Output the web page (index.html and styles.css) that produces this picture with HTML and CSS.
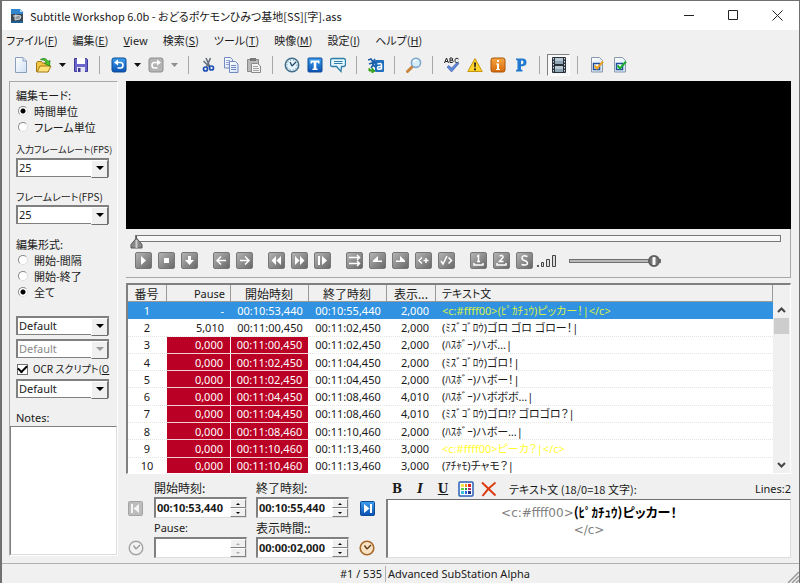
FILE: index.html
```html
<!DOCTYPE html>
<html lang="ja">
<head>
    <meta charset="UTF-8">
    <meta name="viewport" content="width=device-width, initial-scale=1.0">
    <title>Subtitle Workshop 6.0b</title>
    <link rel="stylesheet" href="styles.css">
</head>
<body>
    <svg class="defs" aria-hidden="true">
        <defs>
            <linearGradient id="blue" x1="0" y1="0" x2="0" y2="1"><stop offset="0" stop-color="#3da0ee"/><stop offset="1" stop-color="#0a50b4"/></linearGradient>
            <linearGradient id="orange" x1="0" y1="0" x2="0" y2="1"><stop offset="0" stop-color="#f7a544"/><stop offset="1" stop-color="#d86a08"/></linearGradient>
            <linearGradient id="page" x1="0" y1="0" x2="1" y2="1"><stop offset="0" stop-color="#fff"/><stop offset="1" stop-color="#cfe0f5"/></linearGradient>
        </defs>
    </svg>

    <div class="window">
        <header class="titlebar">
            <svg class="app-icon" width="14" height="16" viewBox="0 0 14 16"><path d="M1 1h9l3 3v11H1z" fill="#3b4650"/><path d="M1 1h9l3 3v2H1z" fill="#2f86cf"/><path d="M10 1v3h3z" fill="#b9dcf5"/><path d="M3 8h4M5 7l6 1-1 3-5 1z" stroke="#cfd6dc" fill="#8d979f"/><path d="M1 13h12v2H1z" fill="#1d5e95"/></svg>
            <span class="title">Subtitle Workshop 6.0b - おどるポケモンひみつ基地[SS][字].ass</span>
            <button class="win-btn" aria-label="Minimize"><svg width="11" height="11"><path d="M0 5.5h10" stroke="#222"/></svg></button>
            <button class="win-btn" aria-label="Maximize"><svg width="11" height="11"><path d="M.5.5h9v9h-9z" fill="none" stroke="#222"/></svg></button>
            <button class="win-btn" aria-label="Close"><svg width="11" height="11"><path d="M.5.5l10 10M10.5.5l-10 10" stroke="#222"/></svg></button>
        </header>

        <nav class="menubar">
            <button>ファイル(<u>F</u>)</button>
            <button>編集(<u>E</u>)</button>
            <button><u>V</u>iew</button>
            <button>検索(<u>S</u>)</button>
            <button>ツール(<u>T</u>)</button>
            <button>映像(<u>M</u>)</button>
            <button>設定(<u>I</u>)</button>
            <button>ヘルプ(<u>H</u>)</button>
        </nav>

        <div class="toolbar">
            <button aria-label="New"><svg width="16" height="16"><path d="M2.500.5h7.500l3.500 3.500v11.500h-11z" fill="url(#page)" stroke="#8ba0bd"/><path d="M10 .5v3.500h3.500" fill="#dce9f8" stroke="#8ba0bd"/></svg></button>
            <button aria-label="Open"><svg width="16" height="16"><path d="M.5 14.500v-9l1-1h4l1 1.500h6v8.500z" fill="#f3c540" stroke="#a07818"/><path d="M1 15l3-6h11l-3 6z" fill="#ffe27a" stroke="#a07818"/><path d="M4.500 2.500q5-3 7.500 2l2-1-.5 5.500-5-2.500 2-1q-1.500-3-6-3z" fill="#4cc82c" stroke="#237d12" stroke-width=".8"/></svg></button>
            <button class="drop" aria-label="Recent files"><svg width="7" height="4"><path d="M0 0h7l-3.500 4z" fill="#111"/></svg></button>
            <button aria-label="Save"><svg width="16" height="16"><path d="M1.500 1.500h12l1 1v12h-13z" fill="#6a66cc" stroke="#3f3b96"/><path d="M4 1h8v6H4z" fill="#fff"/><path d="M4 10h8v5H4z" fill="#e5e5f6"/><path d="M5 11h2.500v4H5z" fill="#3f3b96"/></svg></button>
            <span class="sep"></span>
            <button aria-label="Undo"><svg width="16" height="16"><rect x="1" y="1" width="14" height="14" rx="2" fill="url(#blue)" stroke="#0d4b96"/><path d="M5 5.500h4.500q2.500 0 2.500 2.700t-2.500 2.800h-3" fill="none" stroke="#fff" stroke-width="1.600"/><path d="M7 2.500v6l-4-3z" fill="#fff"/></svg></button>
            <button class="drop" aria-label="Undo list"><svg width="7" height="4"><path d="M0 0h7l-3.500 4z" fill="#111"/></svg></button>
            <button aria-label="Redo" disabled><svg width="16" height="16"><rect x="1" y="1" width="14" height="14" rx="2" fill="#b4b4b4" stroke="#8f8f8f"/><path d="M11 5.500h-4.500q-2.500 0-2.500 2.700t2.500 2.800h3" fill="none" stroke="#fff" stroke-width="1.600"/><path d="M9 2.500v6l4-3z" fill="#fff"/></svg></button>
            <button class="drop" aria-label="Redo list" disabled><svg width="7" height="4"><path d="M0 0h7l-3.500 4z" fill="#8e8e8e"/></svg></button>
            <span class="sep"></span>
            <button aria-label="Cut"><svg width="16" height="16"><path d="M6 1l4 9M10.500 1l-4 9M3.500 4l6 6" stroke="#66727f" stroke-width="1.600"/><circle cx="5.500" cy="12" r="2" fill="none" stroke="#1e4fb4" stroke-width="1.700"/><circle cx="11.500" cy="11" r="2" fill="none" stroke="#1e4fb4" stroke-width="1.700"/></svg></button>
            <button aria-label="Copy"><svg width="16" height="16"><path d="M1.500.5h6l2 2v8.500h-8z" fill="url(#page)" stroke="#7489c0"/><path d="M3 3.500h4M3 5.500h3M3 7.500h3" stroke="#8ea3d4"/><path d="M6.500 4.500h6l2.500 2.500v8.500H6.500z" fill="url(#page)" stroke="#7489c0"/><path d="M8 8.500h5M8 10.500h5M8 12.500h5" stroke="#7489c0"/></svg></button>
            <button aria-label="Paste"><svg width="16" height="16"><path d="M1.500 2.500h11v12h-11z" fill="#b9b9b9" stroke="#8a8a8a"/><path d="M4 1h6v3H4z" fill="#777"/><path d="M5.500 6.500h6l3 2.500v6.500h-9z" fill="#f3f3f3" stroke="#8a8a8a"/><path d="M7 9.500h5M7 11.500h6M7 13.500h6" stroke="#a2a2a2"/></svg></button>
            <span class="sep"></span>
            <button aria-label="Timings"><svg width="16" height="16"><circle cx="8" cy="8" r="6.700" fill="#e6f4fb" stroke="#436d8b" stroke-width="1.500"/><circle cx="8" cy="8" r="5" fill="none" stroke="#5c88a5" stroke-dasharray="1 2"/><path d="M8 9l-2-4M8 9l4-4" stroke="#274b66" stroke-width="1.300"/></svg></button>
            <button aria-label="Texts"><svg width="16" height="16"><rect x="1" y="1" width="14" height="14" rx="1" fill="url(#blue)" stroke="#0d4b96"/><path d="M3.500 3.500h9v3h-1.500v-1h-1.700v6h1.200v1.500h-5V11.500h1.200v-6H5v1H3.500z" fill="#fff"/></svg></button>
            <button aria-label="Subtitles"><svg width="16" height="16"><path d="M2.500 1.500h11q2 0 2 2v4q0 2-2 2h-2l-.5 5-4.500-5h-4q-2 0-2-2v-4q0-2 2-2z" fill="#e6f6fd" stroke="#2c7fa8" stroke-width="1.300"/><path d="M4 4.500h8.500M4 6.500h8.500" stroke="#2c7fa8"/></svg></button>
            <span class="sep"></span>
            <button aria-label="Translation"><svg width="16" height="16"><rect x="7" y="3" width="9" height="12" rx="1" fill="#1f6fbd"/><path d="M9.500 7q4-1.500 4 1v4.500M13.500 9.500q-4-.3-4 1.700t4 .3" fill="none" stroke="#fff" stroke-width="1.500"/><path d="M0 3l3-1 2 3 2-3M1 7l6-2-4 6M4 6l3 4" fill="none" stroke="#1b5fa8" stroke-width="1.600"/><path d="M1 11v3h4M4 11l3 3-3 2z" stroke="#35a01e" fill="#35a01e"/></svg></button>
            <span class="sep"></span>
            <button aria-label="Find"><svg width="16" height="16"><path d="M1.500 14.500l5-5" stroke="#c8843c" stroke-width="3" stroke-linecap="round"/><circle cx="10" cy="5.800" r="4.600" fill="#d5ecfb" stroke="#7aa3c8" stroke-width="1.500"/><path d="M7.500 5q1-2 3-2" fill="none" stroke="#fff" stroke-width="1.400"/></svg></button>
            <span class="sep"></span>
            <button aria-label="Spell check"><svg width="16" height="16"><path d="M.5 6l2-5 2 5M1.300 4.500h2.500M6 1v4.500h2.500q1.500-1.200 0-2.300H6M8.300 3.200q1-1.700-.3-2.200H6M14.500 2q-3.500-2-3.500 1.500t3.500 1.500" fill="none" stroke="#222"/><path d="M3 10l2-1.500 2.500 2.500L13 5.500l2 1L7.500 15z" fill="#5e86d6" stroke="#3b5da8" stroke-width=".6"/></svg></button>
            <button aria-label="Warnings"><svg width="16" height="16"><path d="M8 1.500l7.200 13H.8z" fill="#ffd42a" stroke="#c8960a" stroke-linejoin="round"/><path d="M7 5.500h2l-.4 5H7.400zM7 11.500h2v1.800H7z" fill="#222"/></svg></button>
            <button aria-label="Information"><svg width="16" height="16"><rect x="1" y="1" width="14" height="14" rx="2" fill="url(#orange)" stroke="#a85408"/><path d="M7 3h2v2H7zM6 6.500h3V12h1v1H6v-1h1V7.500H6z" fill="#fff"/></svg></button>
            <button aria-label="Pascal scripts"><svg width="16" height="16"><path d="M3 1.500h6.500q4 0 4 3.800t-4 3.900H8v3.300l1.500.5v1.500H3V13l1.500-.5v-9L3 3zM8 3.500v3.800h1q1.500 0 1.500-2T9 3.500z" fill="#2078d0" fill-rule="evenodd"/></svg></button>
            <span class="sep"></span>
            <button class="pressed" aria-label="Video preview" aria-pressed="true"><svg width="16" height="16"><rect x="1" width="14" height="16" rx="1" fill="#28313a"/><path d="M4 1h8v6H4zM4 9h8v6H4z" fill="#8fa5b5"/><path d="M4 1h8v3H4zM4 9h8v3H4z" fill="#b7c8d3"/><path d="M2.500 1v14M13.500 1v14" stroke="#d9e0e5" stroke-dasharray="1.500 1.500"/></svg></button>
            <span class="sep"></span>
            <button aria-label="Check"><svg width="16" height="16"><path d="M2.500.5h8l3 3v11.500h-11z" fill="url(#page)" stroke="#8b98ab"/><path d="M4.500 6.500h6v6h-6z" fill="#fff" stroke="#214f9e" stroke-width="1.500"/><path d="M5.500 8.500l2.500 3L14 4.500" fill="none" stroke="#eaa020" stroke-width="2"/></svg></button>
            <button aria-label="Check and fix"><svg width="16" height="16"><path d="M2.500.5h8l3 3v11.500h-11z" fill="url(#page)" stroke="#8b98ab"/><path d="M4.500 6.500h6v6h-6z" fill="#fff" stroke="#214f9e" stroke-width="1.500"/><path d="M5.500 8.500l2.500 3L14 4.500" fill="none" stroke="#18b030" stroke-width="2"/></svg></button>
        </div>

        <main class="main">
            <aside class="sidebar">
                <div class="settings">
                    <p>編集モード:</p>
                    <label class="option"><input type="radio" name="mode" checked>時間単位</label>
                    <label class="option"><input type="radio" name="mode">フレーム単位</label>

                    <label class="field fps long" for="inputFps">入力フレームレート(FPS)</label>
                    <div class="combo"><select id="inputFps"><option>25</option></select></div>

                    <label class="field fps" for="fps">フレームレート(FPS)</label>
                    <div class="combo"><select id="fps"><option>25</option></select></div>

                    <p class="field">編集形式:</p>
                    <label class="option"><input type="radio" name="format">開始-間隔</label>
                    <label class="option"><input type="radio" name="format">開始-終了</label>
                    <label class="option"><input type="radio" name="format" checked>全て</label>

                    <div class="combo styles"><select aria-label="Charset"><option>Default</option></select></div>
                    <div class="combo disabled"><select aria-label="Translation charset" disabled><option>Default</option></select></div>
                    <label class="option ocr"><input type="checkbox" checked>OCR スクリプト(<u>O</u></label>
                    <div class="combo"><select aria-label="OCR script"><option>Default</option></select></div>
                    <label class="field" for="notes">Notes:</label>
                </div>
                <textarea class="notes" id="notes"></textarea>
            </aside>

            <div class="work">
                <div class="video"></div>
                <div class="player">
                    <div class="seek"><svg class="seek-thumb" width="13" height="14"><path d="M6.500 1v2M6.500 3L12 9.500V13H1V9.500z" fill="#888" stroke="#555"/><path d="M6.500 5v8" stroke="#ccc" stroke-width="2"/></svg></div>
                    <div class="controls">
                        <div class="group">
                            <button aria-label="Play"><svg viewBox="0 0 17 17"><path d="M6 4l5 4.500L6 13z"/></svg></button>
                            <button aria-label="Stop"><svg viewBox="0 0 17 17"><path d="M6 6h5v5H6z"/></svg></button>
                            <button aria-label="Scroll list"><svg viewBox="0 0 17 17"><path d="M7 4h3v4h3l-4.500 5L4 8h3z"/></svg></button>
                        </div>
                        <div class="group">
                            <button aria-label="Previous subtitle"><svg viewBox="0 0 17 17"><path class="line" d="M13 8.500H4M8 4.500l-4 4 4 4"/></svg></button>
                            <button aria-label="Next subtitle"><svg viewBox="0 0 17 17"><path class="line" d="M4 8.500h9M9 4.500l4 4-4 4"/></svg></button>
                        </div>
                        <div class="group">
                            <button aria-label="Rewind"><svg viewBox="0 0 17 17"><path d="M8 4v9L3.500 8.500zM13 4v9L8.500 8.500z"/></svg></button>
                            <button aria-label="Forward"><svg viewBox="0 0 17 17"><path d="M4 4v9l4.500-4.500zM9 4v9l4.500-4.500z"/></svg></button>
                            <button aria-label="Playback rate"><svg viewBox="0 0 17 17"><path d="M4 4h2v9H4zM8 4v9l5-4.500z"/></svg></button>
                        </div>
                        <div class="group">
                            <button aria-label="Move subtitle"><svg viewBox="0 0 17 17"><path class="line" d="M3 5.500h10M3 11.500h10M11 3l2.500 2.500L11 8M11 9l2.500 2.500L11 14"/></svg></button>
                            <button aria-label="Set start time"><svg viewBox="0 0 17 17"><path d="M9 4v4.500h4V10H4V8.500z"/></svg></button>
                            <button aria-label="Set final time"><svg viewBox="0 0 17 17"><path d="M8 4v4.500H4V10h9V8.500z"/></svg></button>
                            <button aria-label="Start subtitle"><svg viewBox="0 0 17 17"><path class="line" d="M7 5.500L4 8.500l3 3M8.500 8.500h5M11 6v5"/></svg></button>
                            <button aria-label="End subtitle"><svg viewBox="0 0 17 17"><path class="line" d="M3 9l2 3 4-8M10.500 5.500l3 3-3 3"/></svg></button>
                        </div>
                        <div class="group">
                            <button aria-label="First sync point"><svg viewBox="0 0 17 17"><path class="line" d="M7 4.500L8.500 3.500v6M7 9.500h3M4 11v2h9v-2"/></svg></button>
                            <button aria-label="Last sync point"><svg viewBox="0 0 17 17"><path class="line" d="M6.500 4q4-1.500 3.500 1.500L6.500 9.500h4M4 11v2h9v-2"/></svg></button>
                            <button aria-label="Add sync point"><svg viewBox="0 0 17 17"><path class="line" d="M11.500 4.500Q6 2.500 6 6q0 2 2.500 2.500T11.500 11q0 3-6 1.500"/></svg></button>
                        </div>
                        <svg class="volume-icon" width="20" height="14"><path d="M1 11h2v2H1z" fill="#555"/><path d="M5.500 8.500h2v4h-2zM10.500 5.500h3v7h-3zM16.500 1.500h3v11h-3z" fill="#ddd" stroke="#444"/></svg>
                        <input class="volume" type="range" min="0" max="100" value="100" aria-label="Volume">
                    </div>
                </div>

                <div class="list">
                    <div class="list-view">
                        <table>
                            <colgroup><col class="c-num"><col class="c-pause"><col class="c-time"><col class="c-time"><col class="c-dur"><col></colgroup>
                            <thead>
                                <tr><th>番号</th><th>Pause</th><th>開始時刻</th><th>終了時刻</th><th>表示...</th><th>テキスト文</th></tr>
                            </thead>
                            <tbody>
                                <tr class="selected"><td>1</td><td>-</td><td>00:10:53,440</td><td>00:10:55,440</td><td>2,000</td><td class="yellow">&lt;c:#ffff00&gt;(ﾋﾟｶﾁｭｳ)ピッカー！|&lt;/c&gt;</td></tr>
                                <tr><td>2</td><td>5,010</td><td>00:11:00,450</td><td>00:11:02,450</td><td>2,000</td><td>(ﾐｽﾞｺﾞﾛｳ)ゴロ ゴロ ゴロー！|</td></tr>
                                <tr class="bad"><td>3</td><td>0,000</td><td>00:11:00,450</td><td>00:11:02,450</td><td>2,000</td><td>(ﾊｽﾎﾞｰ)ハボ…|</td></tr>
                                <tr class="bad"><td>4</td><td>0,000</td><td>00:11:02,450</td><td>00:11:04,450</td><td>2,000</td><td>(ﾐｽﾞｺﾞﾛｳ)ゴロ！|</td></tr>
                                <tr class="bad"><td>5</td><td>0,000</td><td>00:11:02,450</td><td>00:11:04,450</td><td>2,000</td><td>(ﾊｽﾎﾞｰ)ハボー！|</td></tr>
                                <tr class="bad"><td>6</td><td>0,000</td><td>00:11:04,450</td><td>00:11:08,460</td><td>4,010</td><td>(ﾊｽﾎﾞｰ)ハボボボ…|</td></tr>
                                <tr class="bad"><td>7</td><td>0,000</td><td>00:11:04,450</td><td>00:11:08,460</td><td>4,010</td><td>(ﾐｽﾞｺﾞﾛｳ)ゴロ!? ゴロゴロ？|</td></tr>
                                <tr class="bad"><td>8</td><td>0,000</td><td>00:11:08,460</td><td>00:11:10,460</td><td>2,000</td><td>(ﾊｽﾎﾞｰ)ハボー…|</td></tr>
                                <tr class="bad"><td>9</td><td>0,000</td><td>00:11:10,460</td><td>00:11:13,460</td><td>3,000</td><td class="yellow">&lt;c:#ffff00&gt;ピーカ？|&lt;/c&gt;</td></tr>
                                <tr class="bad"><td>10</td><td>0,000</td><td>00:11:10,460</td><td>00:11:13,460</td><td>3,000</td><td>(ｱﾁｬﾓ)チャモ？|</td></tr>
                            </tbody>
                        </table>
                    </div>
                    <div class="scrollbar">
                        <button aria-label="Scroll up"><svg width="9" height="6"><path d="M1 5l3.500-3.500L8 5" fill="none" stroke="#444" stroke-width="2"/></svg></button>
                        <div class="thumb"></div>
                        <button aria-label="Scroll down"><svg width="9" height="6"><path d="M1 1l3.500 3.500L8 1" fill="none" stroke="#444" stroke-width="2"/></svg></button>
                    </div>
                </div>

                <div class="editor">
                    <div class="times">
                        <button class="icon-btn" aria-label="Previous" disabled><svg width="15" height="15"><rect x=".5" y=".5" width="14" height="14" rx="1" fill="#bcbcbc" stroke="#a2a2a2"/><path d="M3 3h2v9H3zM11 3v9L5.500 7.500z" fill="#f4f4f4"/></svg></button>
                        <div class="time">
                            <label for="show">開始時刻:</label>
                            <div class="spin"><input id="show" type="text" value="00:10:53,440"><span class="arrows"><button aria-label="Up"></button><button aria-label="Down"></button></span></div>
                        </div>
                        <div class="time">
                            <label for="hide">終了時刻:</label>
                            <div class="spin"><input id="hide" type="text" value="00:10:55,440"><span class="arrows"><button aria-label="Up"></button><button aria-label="Down"></button></span></div>
                        </div>
                        <button class="icon-btn" aria-label="Next"><svg width="15" height="15"><rect x=".5" y=".5" width="14" height="14" rx="1" fill="url(#blue)" stroke="#0d4b96"/><path d="M10 3h2v9h-2zM4 3v9l5.500-4.500z" fill="#fff"/></svg></button>

                        <button class="icon-btn" aria-label="Set pause" disabled><svg width="16" height="16"><circle cx="8" cy="8" r="6.800" fill="#f2f2f2" stroke="#a5a5a5" stroke-width="1.400"/><path d="M8 9L5.500 5.500M8 9l4-4" stroke="#999" stroke-width="1.300"/></svg></button>
                        <div class="time">
                            <label class="latin" for="pause">Pause:</label>
                            <div class="spin off"><input id="pause" type="text" disabled><span class="arrows"><button aria-label="Up" disabled></button><button aria-label="Down" disabled></button></span></div>
                        </div>
                        <div class="time">
                            <label for="duration">表示時間::</label>
                            <div class="spin"><input id="duration" type="text" value="00:00:02,000"><span class="arrows"><button aria-label="Up"></button><button aria-label="Down"></button></span></div>
                        </div>
                        <button class="icon-btn" aria-label="Set duration"><svg width="16" height="16"><circle cx="8" cy="8" r="6.800" fill="#f7e3c4" stroke="#a9682a" stroke-width="1.600"/><path d="M8 9L5.500 5.500M8 9l4-4" stroke="#5d3310" stroke-width="1.300"/></svg></button>
                    </div>

                    <div class="text">
                        <div class="format">
                            <button class="b" aria-label="Bold">B</button>
                            <button class="i" aria-label="Italic">I</button>
                            <button class="u" aria-label="Underline">U</button>
                            <button aria-label="Color"><svg width="16" height="16"><rect x="1" y="1" width="14" height="14" rx="1" fill="#fff" stroke="#2a5fb8" stroke-width="1.500"/><path d="M3 3h3v3H3z" fill="#f3e34a"/><path d="M7 3h2v3H7z" fill="#f08a24"/><path d="M10 3h3v3h-3z" fill="#e02020"/><path d="M3 7h3v2H3z" fill="#5dcf4a"/><path d="M7 7h2v2H7z" fill="#28963c"/><path d="M10 7h3v2h-3z" fill="#b02878"/><path d="M3 10h3v3H3z" fill="#3cc4dc"/><path d="M7 10h2v3H7z" fill="#2a62d8"/><path d="M10 10h3v3h-3z" fill="#26317f"/></svg></button>
                            <button aria-label="Remove tags"><svg width="16" height="16"><path d="M1 1.500L14.500 14.500M14.500 1.500Q7 7 1.500 15" fill="none" stroke="#dc3a10" stroke-width="2"/></svg></button>
                            <span class="caption" id="textLabel">テキスト文 (18/0=18 文字):</span>
                            <span class="lines">Lines:2</span>
                        </div>
                        <div class="text-box" role="textbox" contenteditable="true" aria-multiline="true" aria-labelledby="textLabel"><span class="tag">&lt;c:#ffff00&gt;</span><b>(ﾋﾟｶﾁｭｳ)ピッカー！</b><br><span class="tag">&lt;/c&gt;</span></div>
                    </div>
                </div>
            </div>
        </main>

        <footer class="statusbar">
            <span class="pos">#1 / 535</span>
            <span class="fmt">Advanced SubStation Alpha</span>
            <svg class="grip" width="12" height="12"><path d="M1 12L12 1M5 12l7-7M9 12l3-3" stroke="#999" stroke-width="1.500"/></svg>
        </footer>
    </div>
</body>
</html>
```
FILE: styles.css
```css
* {
    box-sizing: border-box;
}

body {
    margin: 0;
    background-color: #f0f0f0;
    color: #1a1a1a;
    font-family: "Noto Sans", "Noto Sans CJK JP", sans-serif;
    font-size: 11px;
    line-height: 16px;
    font-feature-settings: "palt";
}

button,
input,
select,
textarea {
    font: inherit;
    color: inherit;
}

button {
    display: flex;
    align-items: center;
    justify-content: center;
    padding: 0;
    border: none;
    background: none;
}

p {
    margin: 0;
}

svg {
    display: block;
    flex: none;
}

.defs {
    position: absolute;
    width: 0;
    height: 0;
}

.window {
    display: flex;
    flex-direction: column;
    min-height: 100vh;
    border: 1px solid #707070;
    border-left-width: 2px;
}

/* title and menu */
.titlebar {
    display: flex;
    align-items: center;
    height: 29px;
    padding-left: 8px;
    background-color: #fff;
}

.title {
    flex: 1;
    margin-left: 6px;
}

.win-btn {
    width: 44px;
    height: 29px;
}

.menubar {
    display: flex;
    gap: 15px;
    height: 20px;
    padding-left: 4px;
}

.title,
.menubar button,
.settings,
.caption {
    font-family: "Noto Sans CJK JP", sans-serif;
    font-size: 11px;
}

.time label {
    font-family: "Noto Sans CJK JP", sans-serif;
    font-size: 12px;
}

/* toolbar */
.toolbar {
    display: flex;
    align-items: center;
    height: 30px;
    padding-left: 7px;
}

.toolbar button {
    width: 23px;
    height: 22px;
}

.toolbar .drop {
    width: 14px;
}

.toolbar .pressed {
    border: 1px solid #fff;
    border-top-color: #808080;
    border-left-color: #808080;
    background-color: #f8f8f8;
}

.sep {
    width: 1px;
    height: 18px;
    margin: 0 7px;
    background-color: #a8a8a8;
}

/* left panel */
.main {
    display: flex;
    flex: 1;
    gap: 8px;
    padding: 1px 8px 0 7px;
}

.sidebar {
    display: flex;
    flex-direction: column;
    width: 109px;
    margin-bottom: 7px;
    border: 1px solid #a8a8a8;
    border-right-color: #fff;
    border-bottom-color: #fff;
}

.settings {
    padding: 5px 0 0 6px;
    white-space: nowrap;
}

.option {
    display: flex;
    align-items: center;
    height: 16px;
}

.option input {
    appearance: none;
    flex: none;
    width: 10px;
    height: 10px;
    margin: 0 6px 0 2px;
    border: 1px solid #8a8a8a;
    border-right-color: #ddd;
    border-bottom-color: #ddd;
    border-radius: 50%;
    background-color: #fff;
}

.option input:checked {
    background-image: radial-gradient(circle, #000 2px, transparent 3px);
}

.option input[type="checkbox"] {
    display: grid;
    place-items: center;
    width: 11px;
    height: 11px;
    margin: 0 5px 0 1px;
    border-radius: 0;
    border-color: #707070;
    background-image: none;
}

.option input[type="checkbox"]::after {
    content: "";
    width: 7px;
    height: 4px;
    margin-bottom: 2px;
    border-left: 2px solid #000;
    border-bottom: 2px solid #000;
    transform: rotate(-45deg);
}

.field {
    display: block;
    margin-top: 7px;
}

.fps {
    font-size: 10px;
}

.fps.long {
    font-size: 9px;
}

.combo {
    position: relative;
    height: 19px;
    margin: 0 8px 12px 0;
    border: 1px solid #808080;
    border-width: 2px 1px 1px 2px;
    background-color: #fff;
}

.combo::before {
    content: "";
    position: absolute;
    top: 0;
    right: 0;
    width: 15px;
    height: 100%;
    border: 1px solid #fff;
    border-right-color: #707070;
    border-bottom-color: #707070;
    background-color: #f0f0f0;
    pointer-events: none;
}

.combo::after {
    content: "";
    position: absolute;
    top: 6px;
    right: 4px;
    border: 4px solid transparent;
    border-top-color: #000;
    border-bottom: none;
    pointer-events: none;
}

.combo select {
    appearance: none;
    display: block;
    width: 100%;
    height: 16px;
    padding: 0 18px 0 1px;
    border: none;
    background: none;
    font-family: "Noto Sans", sans-serif;
    line-height: 16px;
}

.combo.styles {
    margin-top: 16px;
    margin-bottom: 4px;
}

.combo.disabled {
    margin-bottom: 3px;
    color: #8a8a8a;
}

.combo.disabled::after {
    border-top-color: #9a9a9a;
}

.combo select:disabled {
    opacity: 1;
}

.ocr {
    margin-bottom: 2px;
    font-size: 10px;
}

.settings label[for="notes"] {
    font-family: "Noto Sans", sans-serif;
}

.notes {
    flex: 1;
    width: 100%;
    border: 1px solid #808080;
    border-right-color: #ddd;
    border-bottom-color: #ddd;
    resize: none;
    outline: none;
}

/* video and player */
.work {
    display: flex;
    flex-direction: column;
    flex: 1;
    min-width: 0;
}

.video {
    flex: 1;
    min-height: 148px;
    background-color: #000;
}

.player {
    height: 49px;
    margin-bottom: 5px;
    padding: 6px 9px 0;
    border: 1px solid #a8a8a8;
    border-width: 0 1px 1px 0;
}

.seek {
    position: relative;
    height: 7px;
    border: 1px solid #777;
    background-color: #f8f8f8;
}

.seek-thumb {
    position: absolute;
    top: -1px;
    left: -6px;
}

.controls {
    display: flex;
    align-items: center;
    gap: 15px;
    margin-top: 10px;
}

.group {
    display: flex;
    gap: 6px;
}

.group button {
    width: 17px;
    height: 17px;
    border: 1px solid #777;
    border-radius: 2px;
    background: linear-gradient(135deg, #b4b4b4, #686868);
}

.group svg {
    width: 17px;
    height: 17px;
    fill: #fff;
}

.group .line {
    fill: none;
    stroke: #fff;
    stroke-width: 1.5;
}

.volume-icon {
    margin-left: -12px;
}

.volume {
    appearance: none;
    width: 92px;
    height: 4px;
    margin: 0 0 0 -2px;
    border: 1px solid #707070;
    background-color: #b8b8b8;
}

.volume::-webkit-slider-thumb {
    appearance: none;
    width: 12px;
    height: 12px;
    border: 2px solid #606060;
    border-radius: 50%;
    background: linear-gradient(90deg, #777 2px, #fff 3px, #fff 5px, #777 6px);
}

/* subtitle list */
.list {
    display: flex;
    height: 191px;
    border: 1px solid #fff;
    border-top: 2px solid #808080;
    border-left: 2px solid #808080;
    background-color: #fff;
}

.list-view {
    flex: 1;
    min-width: 0;
    overflow: hidden;
}

table {
    width: 100%;
    height: 190px;
    table-layout: fixed;
    border-collapse: separate;
    border-spacing: 0;
    line-height: 15px;
    white-space: nowrap;
}

.c-num {
    width: 39px;
}

.c-pause {
    width: 64px;
}

.c-time {
    width: 78px;
}

.c-dur {
    width: 49px;
}

th,
td {
    padding: 0 7px 0 6px;
    text-align: center;
    font-weight: normal;
}

th {
    height: 17px;
    border-right: 1px solid #999;
    border-bottom: 1px solid #999;
    background-color: #f0f0f0;
}

th:nth-child(n+3),
th:first-child {
    font-family: "Noto Sans CJK JP", sans-serif;
    font-size: 12px;
}

th:last-child {
    font-size: 11px;
}

td {
    border-bottom: 1px dotted #e4e4e4;
}

th:nth-child(2),
td:nth-child(2),
th:nth-child(5),
td:nth-child(5) {
    padding-left: 0;
    text-align: right;
}

th:nth-child(2) {
    padding-right: 5px;
}

td:nth-child(3),
td:nth-child(4) {
    padding: 0;
}

th:last-child,
td:last-child {
    text-align: left;
}

.bad td:nth-child(2),
.bad td:nth-child(3) {
    border-right: 1px solid #fff;
    border-bottom: 1px solid #f3d0d6;
    background-color: #ba0024;
    color: #fff;
}

.yellow {
    color: #ffff30;
}

.selected td {
    background-color: #3092e0;
    border-bottom-color: #3092e0;
    color: #fff;
}

.selected .yellow {
    color: #d8f04a;
}

.scrollbar {
    display: flex;
    flex-direction: column;
    width: 17px;
    padding-top: 17px;
    background-color: #f0f0f0;
}

.scrollbar button {
    height: 16px;
}

.thumb {
    height: 16px;
    margin: 0 1px auto;
    background-color: #cdcdcd;
}

/* time and text editor */
.editor {
    display: flex;
    gap: 9px;
    padding: 6px 0 5px;
}

.times {
    display: grid;
    grid-template-columns: 19px 93px 93px 18px;
    gap: 2px 9px;
    align-items: end;
    width: 251px;
}

.icon-btn {
    height: 20px;
}

.time label {
    display: block;
}

.time .latin {
    font-family: "Noto Sans", sans-serif;
    font-size: 11px;
}

.spin {
    display: flex;
    height: 21px;
    margin-top: 1px;
    border: 1px solid #ddd;
    border-top: 2px solid #808080;
    border-left: 2px solid #808080;
    background-color: #fff;
}

.spin input {
    flex: 1;
    min-width: 0;
    padding: 0 0 0 1px;
    border: none;
    background: none;
    font-weight: bold;
    line-height: 16px;
}

.arrows {
    display: flex;
    flex-direction: column;
    width: 16px;
}

.arrows button {
    flex: 1;
    border: 1px solid #fff;
    border-right-color: #808080;
    border-bottom-color: #808080;
    background-color: #f0f0f0;
}

.arrows button::before {
    content: "";
    border: 2px solid transparent;
    border-top: none;
    border-bottom-color: #000;
}

.arrows button:last-child::before {
    border-top: 2px solid #000;
    border-bottom: none;
}

.off .arrows button::before {
    border-top-color: #aaa;
    border-bottom-color: #aaa;
}

.text {
    display: flex;
    flex-direction: column;
    flex: 1;
    min-width: 0;
}

.format {
    display: flex;
    align-items: center;
    gap: 1px;
    height: 17px;
}

.format button {
    width: 22px;
    height: 17px;
    font-family: "DejaVu Serif", serif;
    font-size: 12px;
    font-weight: bold;
}

.format .i {
    font-style: italic;
}

.format .u {
    text-decoration: underline;
}

.caption {
    margin-left: 8px;
}

.lines {
    margin-left: auto;
}

.text-box {
    flex: 1;
    margin-top: 2px;
    padding: 3px 4px;
    border: 1px solid #ddd;
    border-top: 1px solid #707070;
    border-left: 2px solid #808080;
    background-color: #fff;
    outline: none;
    font-family: "DejaVu Sans", "Noto Sans CJK JP", sans-serif;
    font-size: 12px;
    line-height: 17px;
    text-align: center;
}

.text-box b {
    color: #000;
    font-family: "Noto Sans CJK JP", sans-serif;
    font-size: 13px;
}

.tag {
    color: #808080;
}

/* status bar */
.statusbar {
    display: flex;
    align-items: center;
    height: 20px;
    border-top: 1px solid #b0b0b0;
}

.pos {
    width: 384px;
    padding-right: 3px;
    border-right: 1px solid #b0b0b0;
    text-align: right;
}

.fmt {
    flex: 1;
    padding-left: 2px;
}

.grip {
    align-self: flex-end;
}
```
